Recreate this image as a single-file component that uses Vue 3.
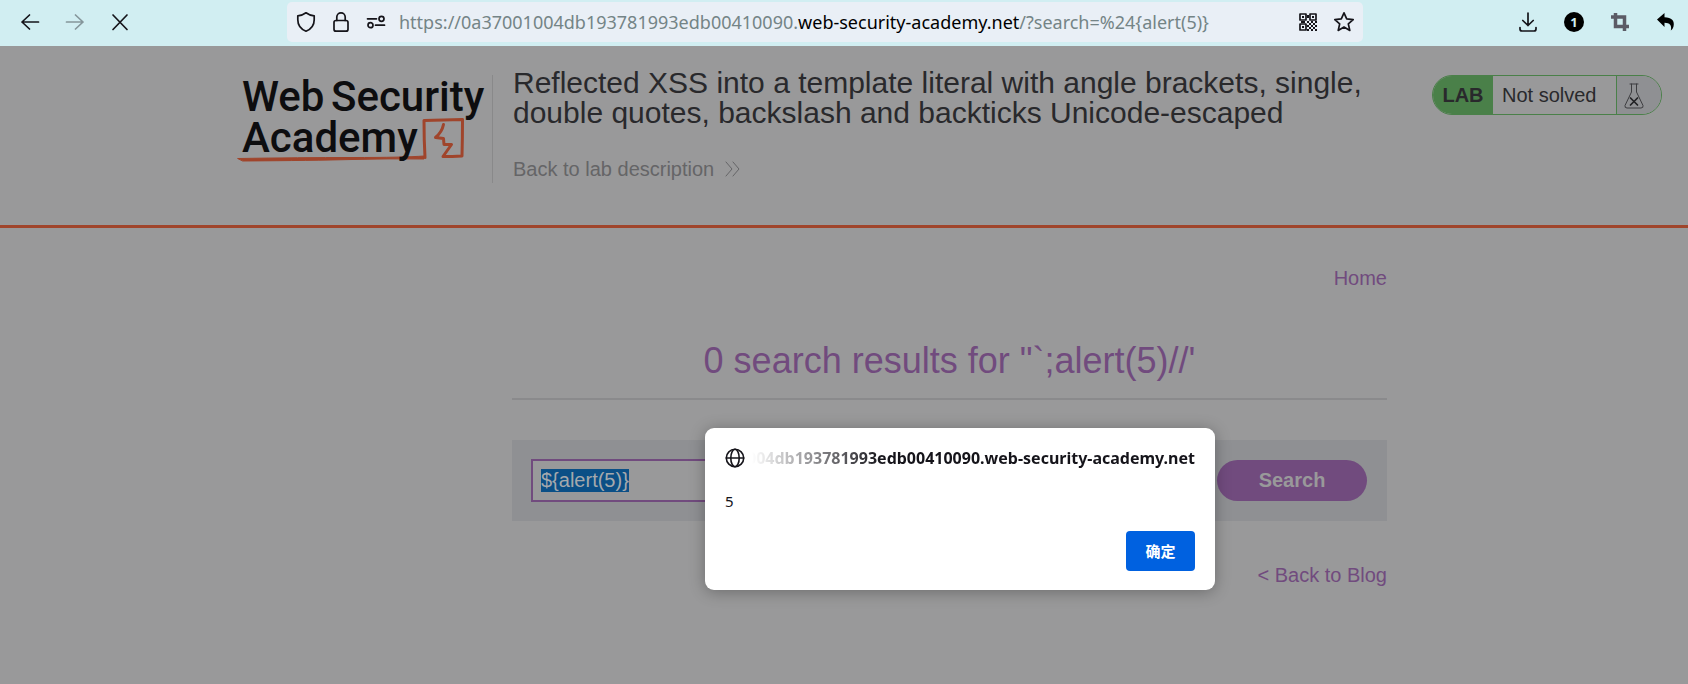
<script setup>
import { ref, onMounted } from 'vue'

const term = ref('${alert(5)}')
const searchBox = ref(null)

const qrCells = []
for (let y = 0; y < 5; y++) {
  for (let x = 0; x < 5; x++) {
    if ((x + y) % 2 === 0) qrCells.push({ x: 9 + x * 2, y: 9 + y * 2 })
  }
}

onMounted(() => {
  searchBox.value.focus({ preventScroll: true })
  searchBox.value.select()
})
</script>

<template>
  <div class="browser">
    <div class="toolbar">
      <div class="nav">
        <button type="button" aria-label="Back">
          <svg width="20" height="20" viewBox="0 0 20 20"><path d="M18.500 10H2M9.500 3L2 10l7.500 7" /></svg>
        </button>
        <button type="button" aria-label="Forward" class="faded">
          <svg width="20" height="20" viewBox="0 0 20 20"><path d="M1.500 10H18M10.500 3l7.500 7-7.500 7" /></svg>
        </button>
        <button type="button" aria-label="Stop">
          <svg width="20" height="20" viewBox="0 0 20 20"><path d="M3 3l14 14.500M17 3L3 17.500" /></svg>
        </button>
      </div>
      <div class="address">
        <svg width="20" height="22" viewBox="0 0 20 22"><path d="M10 1.800C7.500 3.700 4.700 4.500 1.800 4.800v4c0 5 3 9.400 8.200 11.400 5.200-2 8.200-6.400 8.200-11.400v-4C15.300 4.500 12.500 3.700 10 1.800z" /></svg>
        <svg width="20" height="22" viewBox="0 0 20 22"><rect x="3" y="9.500" width="14" height="10.700" rx="2" /><path d="M5.800 9.500V6a4.200 4.200 0 0 1 8.400 0v3.500" /></svg>
        <svg width="20" height="22" viewBox="0 0 20 22"><circle cx="15.500" cy="7.800" r="2.500" /><circle cx="4.500" cy="14.200" r="2.500" /><path d="M1.500 7.800h9M9.500 14.200h9" /></svg>
        <div class="url">https://0a37001004db193781993edb00410090.<b>web-security-academy.net</b>/?search=%24{alert(5)}</div>
        <button type="button" aria-label="QR code">
          <svg width="20" height="20" viewBox="0 0 20 20">
            <rect x="2" y="2" width="6" height="6" /><rect x="12" y="2" width="6" height="6" /><rect x="2" y="12" width="6" height="6" />
            <g class="solid">
              <rect x="4" y="4" width="2" height="2" /><rect x="14" y="4" width="2" height="2" /><rect x="4" y="14" width="2" height="2" />
              <rect x="9" y="3" width="2" height="3" /><rect x="3" y="9" width="4" height="2" />
              <rect v-for="c in qrCells" :key="c.x + '-' + c.y" :x="c.x" :y="c.y" width="2" height="2" />
            </g>
          </svg>
        </button>
        <button type="button" aria-label="Bookmark">
          <svg width="22" height="22" viewBox="0 0 22 22"><path d="M11 1.800l2.700 6.100 6.500.7-4.900 4.300 1.500 6.500-5.800-3.300-5.800 3.300 1.500-6.500-4.900-4.300 6.500-.7z" /></svg>
        </button>
      </div>
      <div class="tools">
        <button type="button" aria-label="Downloads">
          <svg width="20" height="20" viewBox="0 0 20 20"><path d="M10 1v12.500M4.800 8.500L10 13.500l5.200-5M2 15.500v1.500a2 2 0 0 0 2 2h12a2 2 0 0 0 2-2v-1.500" /></svg>
        </button>
        <button type="button" aria-label="Extension, 1"><span class="count">1</span></button>
        <button type="button" aria-label="Crop">
          <svg width="20" height="20" viewBox="0 0 20 20" class="crop"><path d="M1 5h13.500v14M5.500 1v13.500H19" /></svg>
        </button>
        <button type="button" aria-label="Undo">
          <svg width="20" height="20" viewBox="0 0 20 20"><path class="undo" d="M1 7.500L8.500 1v4.300C15.500 5.300 19 9 17.500 14.500c-.5 2-1.500 3.300-2.700 4 1.300-5-1-7.700-6.300-7.700V15z" /></svg>
        </button>
      </div>
    </div>

    <header class="banner">
      <a href="#" class="brand" aria-label="Web Security Academy">
        <svg width="256" height="108" viewBox="236 75 256 108">
          <g class="mark">
            <path class="under" d="M238 158.500Q300 157.500 352 157.500T424 156l0 3Q390 158.500 352 159.500T243 161z" />
            <path d="M425 157.500Q424 140 424 120.500Q444 120 462.500 119.500Q462.500 138 462 156Q452 156.500 443 156.500L451.500 144.500H444L443.500 138.500L435.500 137.500Q442 132 443.500 124.500" />
          </g>
          <g class="word">
            <text x="242" y="111">Web</text>
            <text x="331" y="111">Security</text>
            <text x="242" y="152">Academy</text>
          </g>
        </svg>
      </a>
      <div class="lab-title">
        <h2>Reflected XSS into a template literal with angle brackets, single, double quotes, backslash and backticks Unicode-escaped</h2>
        <a href="#" class="back">Back to lab description
          <svg width="15" height="16" viewBox="0 0 15 16"><path d="M1 1l6 7-6 7M8 1l6 7-6 7" /></svg>
        </a>
      </div>
      <div class="status">
        <strong>LAB</strong>
        <span class="state">Not solved</span>
        <span class="flask">
          <svg width="20" height="26" viewBox="0 0 20 26"><path d="M6 1h8M7.500 1v8L1 22.500Q.5 25 3 25h14q2.500 0 2-2.500L12.500 9V1" /><path class="cross" d="M6.500 15l7 7M13.500 15l-7 7" /></svg>
        </span>
      </div>
    </header>

    <main>
      <div class="content">
        <nav><a href="#">Home</a></nav>
        <h1>0 search results for "`;alert(5)//'</h1>
        <form class="search" @submit.prevent>
          <input ref="searchBox" v-model="term" type="text" aria-label="Search the blog">
          <button type="submit">Search</button>
        </form>
        <a href="#" class="blog">&lt; Back to Blog</a>
      </div>
    </main>

    <div class="dialog" role="dialog" aria-labelledby="origin">
      <div class="origin-row">
        <svg width="20" height="20" viewBox="0 0 20 20"><circle cx="10" cy="10" r="8.700" /><ellipse cx="10" cy="10" rx="4.200" ry="8.700" /><path d="M1.300 10h17.400" /></svg>
        <div id="origin" class="origin"><span>0a37001004db193781993edb00410090.web-security-academy.net</span></div>
      </div>
      <p>5</p>
      <button type="button">确定</button>
    </div>
  </div>
</template>

<style>
body {
  margin: 0;
  background: #99999a;
}
</style>

<style scoped>
.browser {
  position: relative;
  min-height: 100vh;
  overflow: hidden;
  font-family: "Liberation Sans", Arial, sans-serif;
  font-size: 20px;
  line-height: 24px;
  color: #29292c;
  background: #99999a;
}
h1, h2, p { margin: 0; font-weight: 400; }
a { color: #714b7e; text-decoration: none; }
button { border: 0; padding: 0; font: inherit; background: none; cursor: pointer; }
svg { display: block; flex: none; fill: none; stroke: #15141a; stroke-width: 2; stroke-linecap: round; stroke-linejoin: round; }

.toolbar {
  box-sizing: border-box;
  height: 46px;
  padding: 1px 12px 4px 20px;
  display: flex;
  align-items: center;
  background: #d1eef2;
}
.nav { display: flex; gap: 25px; width: 267px; }
.toolbar svg { stroke-width: 1.700; }
.faded { opacity: 0.4; }
.address {
  flex: 1;
  min-width: 0;
  box-sizing: border-box;
  height: 40px;
  padding: 0 8px 0 9px;
  display: flex;
  align-items: center;
  gap: 15px;
  border-radius: 5px;
  background: #e9eff6;
}
.url {
  flex: 1;
  min-width: 0;
  margin-left: -2px;
  overflow: hidden;
  white-space: nowrap;
  font-family: "Noto Sans", "Open Sans", sans-serif;
  font-size: 18px;
  color: #748486;
}
.url b { font-weight: 400; color: #000; }
.toolbar .solid { fill: #15141a; stroke: none; }
.address button { flex: none; }
.tools { display: flex; align-items: center; justify-content: flex-end; gap: 26px; width: 313px; }
.count {
  display: block;
  width: 20px;
  border-radius: 10px;
  background: #000;
  color: #d1eef2;
  font: 700 13px/20px "Open Sans", sans-serif;
}
.toolbar .crop { stroke: #5b5b66; stroke-width: 3.500; stroke-linecap: butt; stroke-linejoin: miter; }
.undo { fill: #000; stroke: none; }

.banner {
  box-sizing: border-box;
  height: 182px;
  display: flex;
  align-items: flex-start;
  padding: 22px 26px 0 236px;
  border-bottom: 3px solid #a0452c;
}
.brand { flex: none; margin-top: 7px; border-right: 1px solid #89898a; }
.brand svg { overflow: visible; }
.mark { stroke: #a0452c; stroke-width: 3; }
.mark .under { fill: #a0452c; stroke-width: 1; }
.word { font-family: Roboto, sans-serif; font-size: 42px; font-weight: 500; fill: #0d0d0f; stroke: none; }
.lab-title { flex: 1; max-width: 876px; margin-left: 20px; }
.lab-title h2 { font-size: 30px; line-height: 30px; }
.back { display: flex; align-items: center; gap: 11px; margin-top: 29px; color: #656567; }
.back svg { stroke: #656567; stroke-width: 1; }
.status {
  flex: none;
  box-sizing: border-box;
  width: 230px;
  height: 40px;
  margin: 7px 0 0 auto;
  display: flex;
  overflow: hidden;
  line-height: 38px;
  border: 1px solid #4a8049;
  border-radius: 20px;
}
.status strong { width: 60px; text-align: center; background: #4a8049; }
.state { flex: 1; padding-left: 9px; }
.flask { width: 37px; padding: 7px 0 0 7px; border-left: 1px solid #4a8049; background: #8f9093; }
.flask svg { stroke: #3d3d40; stroke-width: 1; }
.flask .cross { stroke: #222225; stroke-width: 1.700; }

main { display: grid; grid-template-columns: 1fr minmax(0, 875px) 301px; }
.content { grid-column: 2; padding-top: 38px; }
nav { text-align: right; }
h1 {
  margin-top: 51px;
  padding-bottom: 17px;
  text-align: center;
  font-size: 36px;
  line-height: 40px;
  color: #714b7e;
  border-bottom: 2px solid #8a8a8c;
}
.search { display: flex; align-items: center; gap: 20px; margin-top: 40px; padding: 19px 20px 19px 19px; background: #8f9093; }
.search input {
  flex: 1;
  min-width: 0;
  box-sizing: border-box;
  height: 43px;
  padding: 0 8px;
  border: 2px solid #714b7e;
  border-radius: 0;
  outline: 0;
  font: inherit;
  color: #29292c;
  background: #99999a;
}
.search input::selection { color: #a5a9ad; background: #0b4f86; }
.search button { width: 150px; height: 41px; padding-bottom: 2px; border-radius: 21px; font-weight: 700; color: #99999a; background: #714b7e; }
.blog { display: block; margin-top: 42px; text-align: right; }

.dialog {
  position: absolute;
  left: 705px;
  top: 428px;
  box-sizing: border-box;
  width: 510px;
  padding: 19px 20px;
  display: flex;
  flex-direction: column;
  border-radius: 9px;
  background: #fff;
  box-shadow: 0 2px 16px rgba(0, 0, 0, 0.3);
  font-family: "Noto Sans", "Noto Sans CJK SC", sans-serif;
  font-size: 15px;
  line-height: 22px;
  color: #15141a;
}
.origin-row { display: flex; align-items: center; gap: 7px; }
.origin-row svg { stroke-width: 1.600; }
.origin {
  flex: 1;
  min-width: 0;
  display: flex;
  justify-content: flex-end;
  overflow: hidden;
  white-space: nowrap;
  font-size: 16px;
  font-weight: 700;
  mask-image: linear-gradient(to right, transparent, #000 130px);
}
.dialog p { margin-top: 21px; }
.dialog button { align-self: flex-end; width: 69px; height: 40px; margin-top: 19px; border-radius: 4px; font-weight: 700; color: #fff; background: #0061e0; }
</style>
